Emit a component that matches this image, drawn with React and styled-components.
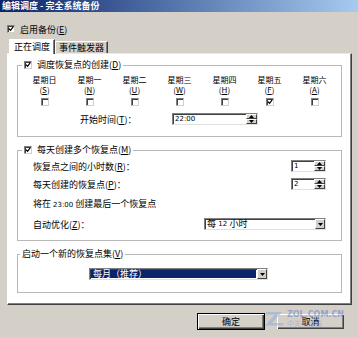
import React from "react";
import styled, { createGlobalStyle } from "styled-components";

const Global = createGlobalStyle`
  html, body {
    margin: 0;
    padding: 0;
    background: #d4d0c8;
  }
  body {
    font-family: "Noto Sans CJK SC", "DejaVu Sans", sans-serif;
    font-size: 9px;
    color: #000;
  }
`;

const Window = styled.div`
  width: 358px;
  height: 337px;
  background: #d4d0c8;
  position: relative;
  overflow: hidden;
  display: flex;
  flex-direction: column;
`;

const TitleBar = styled.div`
  height: 12px;
  background: linear-gradient(to right, #0a246a, #a6caf0);
  color: #fff;
  font-weight: bold;
  font-size: 9px;
  line-height: 12px;
  padding-left: 2px;
  white-space: nowrap;
  overflow: hidden;
`;

const EnableRow = styled.div`
  display: flex;
  align-items: center;
  gap: 5px;
  height: 10px;
  margin: 12px 0 0 7px;
`;

const Box = styled.span`
  width: 8px;
  height: 8px;
  box-sizing: border-box;
  background: #fff;
  border-top: 1px solid #808080;
  border-left: 1px solid #808080;
  border-right: 1px solid #d4d0c8;
  border-bottom: 1px solid #d4d0c8;
  box-shadow: inset 1px 1px 0 #404040;
  display: inline-flex;
  align-items: center;
  justify-content: center;
  flex: none;
`;

const Check = ({ on }) => (
  <Box>
    {on && (
      <svg width="6" height="6" viewBox="0 0 7 7">
        <path d="M1 3 L3 5 L6 1" stroke="#000" strokeWidth="1.4" fill="none" />
      </svg>
    )}
  </Box>
);

const Key = styled.span`
  text-decoration: underline;
`;

const TabStrip = styled.div`
  display: flex;
  align-items: flex-end;
  height: 15px;
  margin: 4px 0 0 9px;
  position: relative;
  z-index: 1;
`;

const Tab = styled.div`
  height: ${(p) => (p.$active ? 15 : 12)}px;
  line-height: ${(p) => (p.$active ? 14 : 12)}px;
  padding: 0 ${(p) => (p.$active ? 4 : 3)}px;
  box-sizing: border-box;
  background: ${(p) => (p.$active ? "#fff" : "#d4d0c8")};
  border-top: 1px solid #fff;
  border-left: 1px solid #fff;
  border-right: 1px solid #404040;
  box-shadow: inset -1px 0 0 #808080;
  margin-bottom: ${(p) => (p.$active ? -1 : 0)}px;
  white-space: nowrap;
`;

const Panel = styled.div`
  margin-left: 7px;
  width: 345px;
  height: 252px;
  box-sizing: border-box;
  background: #fff;
  border-top: 1px solid #e8e8e8;
  border-left: 1px solid #fff;
  border-right: 1px solid #404040;
  border-bottom: 1px solid #404040;
  box-shadow: inset -1px -1px 0 #808080;
  padding: 6px 0 0 9px;
  display: flex;
  flex-direction: column;
  gap: 8px;
`;

const Group = styled.fieldset`
  margin: 0;
  width: 325px;
  box-sizing: border-box;
  border: 1px solid #b8b8b8;
  padding: ${(p) => p.$pad};
  display: flex;
  flex-direction: column;
`;

const Legend = styled.legend`
  padding: 0 2px;
  margin-left: ${(p) => p.$ml || 4}px;
  height: 10px;
  line-height: 10px;
  display: flex;
  align-items: center;
  gap: 5px;
`;

const DayGrid = styled.div`
  display: grid;
  grid-template-columns: repeat(7, 45px);
  margin-left: 4px;
`;

const Day = styled.div`
  display: flex;
  flex-direction: column;
  align-items: center;
  line-height: 10px;
  font-size: 8px;
`;

const DayBox = styled.div`
  margin-top: 3px;
  display: flex;
`;

const FieldRow = styled.div`
  display: flex;
  align-items: center;
  height: ${(p) => p.$h || 12}px;
  margin-top: ${(p) => p.$mt || 0}px;
  padding-left: ${(p) => p.$pl || 0}px;
  justify-content: ${(p) => p.$justify || "flex-start"};
`;

const Label = styled.span`
  width: ${(p) => (p.$w ? p.$w + "px" : "auto")};
  white-space: nowrap;
`;

const Sunken = styled.div`
  width: ${(p) => p.$w}px;
  height: ${(p) => p.$h || 12}px;
  box-sizing: border-box;
  background: #fff;
  border-top: 1px solid #808080;
  border-left: 1px solid #808080;
  border-right: 1px solid #e0e0e0;
  border-bottom: 1px solid #e0e0e0;
  box-shadow: inset 1px 1px 0 #404040;
  display: flex;
  align-items: stretch;
  margin-left: ${(p) => p.$ml || 0}px;
`;

const FieldText = styled.div`
  flex: 1;
  padding-left: 2px;
  line-height: 10px;
  font-family: "DejaVu Sans", sans-serif;
  font-size: 7px;
  white-space: nowrap;
  display: flex;
  align-items: center;
  background: ${(p) => (p.$selected ? "#0a246a" : "transparent")};
  color: ${(p) => (p.$selected ? "#fff" : "#000")};
  margin: ${(p) => (p.$selected ? "1px" : "0")};
`;

const CjkText = styled.span`
  font-family: "Noto Sans CJK SC", sans-serif;
  font-size: 9px;
`;

const Spinner = styled.div`
  width: 11px;
  display: flex;
  flex-direction: column;
`;

const RaisedBtn = styled.div`
  flex: 1;
  background: #d4d0c8;
  box-sizing: border-box;
  border-top: 1px solid #fff;
  border-left: 1px solid #fff;
  border-right: 1px solid #404040;
  border-bottom: 1px solid #404040;
  display: flex;
  align-items: center;
  justify-content: center;
`;

const Arrow = ({ up }) => (
  <svg width="5" height="3" viewBox="0 0 5 3">
    <path d={up ? "M0 3 L2.5 0 L5 3 Z" : "M0 0 L2.5 3 L5 0 Z"} fill="#000" />
  </svg>
);

const Spin = ({ w, ml, value }) => (
  <Sunken $w={w} $ml={ml}>
    <FieldText>{value}</FieldText>
    <Spinner>
      <RaisedBtn>
        <Arrow up />
      </RaisedBtn>
      <RaisedBtn>
        <Arrow />
      </RaisedBtn>
    </Spinner>
  </Sunken>
);

const DropBtn = styled(RaisedBtn)`
  flex: none;
  width: 10px;
`;

const Combo = ({ w, ml, children, selected }) => (
  <Sunken $w={w} $ml={ml}>
    <FieldText $selected={selected}>{children}</FieldText>
    <DropBtn>
      <Arrow />
    </DropBtn>
  </Sunken>
);

const Plain = styled.div`
  line-height: 10px;
  white-space: nowrap;
`;

const Digits = styled.span`
  font-family: "DejaVu Sans", sans-serif;
  font-size: 7px;
`;

const ButtonRow = styled.div`
  display: flex;
  justify-content: flex-end;
  gap: 11px;
  margin: 8px 13px 0 0;
`;

const Button = styled.button`
  width: ${(p) => p.$w}px;
  height: 17px;
  font-family: "Noto Sans CJK SC", sans-serif;
  font-size: 9px;
  padding: 0;
  background: #d4d0c8;
  box-sizing: border-box;
  border: 1px solid ${(p) => (p.$default ? "#000" : "#d4d0c8")};
  box-shadow: inset 1px 1px 0 #fff, inset -1px -1px 0 #404040,
    inset -2px -2px 0 #808080;
  color: #000;
`;

const Watermark = styled.div`
  position: absolute;
  left: 265px;
  top: 311px;
  display: flex;
  align-items: flex-start;
  gap: 2px;
  opacity: 0.5;
  pointer-events: none;
`;

const WmText = styled.div`
  display: flex;
  flex-direction: column;
  line-height: 8px;
  color: #5a78c0;
`;

const WmBig = styled.span`
  font-family: "DejaVu Sans", sans-serif;
  font-weight: bold;
  font-size: 8px;
`;

const WmSmall = styled.span`
  font-size: 7px;
  color: #8aa0d0;
`;

const days = [
  ["星期日", "S"],
  ["星期一", "N"],
  ["星期二", "U"],
  ["星期三", "W"],
  ["星期四", "H"],
  ["星期五", "F"],
  ["星期六", "A"],
];

export default function App() {
  return (
    <Window>
      <Global />
      <TitleBar>编辑调度 - 完全系统备份</TitleBar>

      <EnableRow>
        <Check on />
        <span>
          启用备份(<Key>E</Key>)
        </span>
      </EnableRow>

      <TabStrip>
        <Tab $active>正在调度</Tab>
        <Tab>事件触发器</Tab>
      </TabStrip>

      <Panel>
        <Group $pad="5px 0 11px 0">
          <Legend>
            <Check on />
            <span>
              调度恢复点的创建(<Key>D</Key>)
            </span>
          </Legend>
          <DayGrid>
            {days.map(([name, key]) => (
              <Day key={key}>
                <span>{name}</span>
                <span>
                  (<Key>{key}</Key>)
                </span>
                <DayBox>
                  <Check on={key === "F"} />
                </DayBox>
              </Day>
            ))}
          </DayGrid>
          <FieldRow $mt={7} $pl={62}>
            <Label $w={92}>
              开始时间(<Key>T</Key>)：
            </Label>
            <Spin w={86} value="22:00" />
          </FieldRow>
        </Group>

        <Group $pad="5px 15px 10px 15px">
          <Legend $ml={-11}>
            <Check on />
            <span>
              每天创建多个恢复点(<Key>M</Key>)
            </span>
          </Legend>
          <FieldRow $justify="space-between">
            <Label>
              恢复点之间的小时数(<Key>R</Key>)：
            </Label>
            <Spin w={35} value="1" />
          </FieldRow>
          <FieldRow $mt={6} $justify="space-between">
            <Label>
              每天创建的恢复点(<Key>P</Key>)：
            </Label>
            <Spin w={35} value="2" />
          </FieldRow>
          <FieldRow $mt={9} $h={10}>
            <Plain>
              将在 <Digits>23:00</Digits> 创建最后一个恢复点
            </Plain>
          </FieldRow>
          <FieldRow $mt={9} $justify="space-between">
            <Label>
              自动优化(<Key>Z</Key>)：
            </Label>
            <Combo w={122}>
              <CjkText>每</CjkText>&nbsp;12&nbsp;<CjkText>小时</CjkText>
            </Combo>
          </FieldRow>
        </Group>

        <Group $pad="9px 0 12px 0">
          <Legend $ml={2}>
            <span>
              启动一个新的恢复点集(<Key>V</Key>)
            </span>
          </Legend>
          <FieldRow $h={12}>
            <Combo w={179} ml={71} selected>
              <CjkText>每月（推荐）</CjkText>
            </Combo>
          </FieldRow>
        </Group>
      </Panel>

      <ButtonRow>
        <Button $w={68} $default>
          确定
        </Button>
        <Button $w={69}>取消</Button>
      </ButtonRow>

      <Watermark>
        <svg width="20" height="15" viewBox="0 0 20 15">
          <path d="M1 1 H17 L7 12 H19 L17 14.5 H0 L10 3.5 H1 Z" fill="#8aa8e0" />
        </svg>
        <WmText>
          <WmBig>ZOL.COM.CN</WmBig>
          <WmSmall>中关村在线</WmSmall>
        </WmText>
      </Watermark>
    </Window>
  );
}
